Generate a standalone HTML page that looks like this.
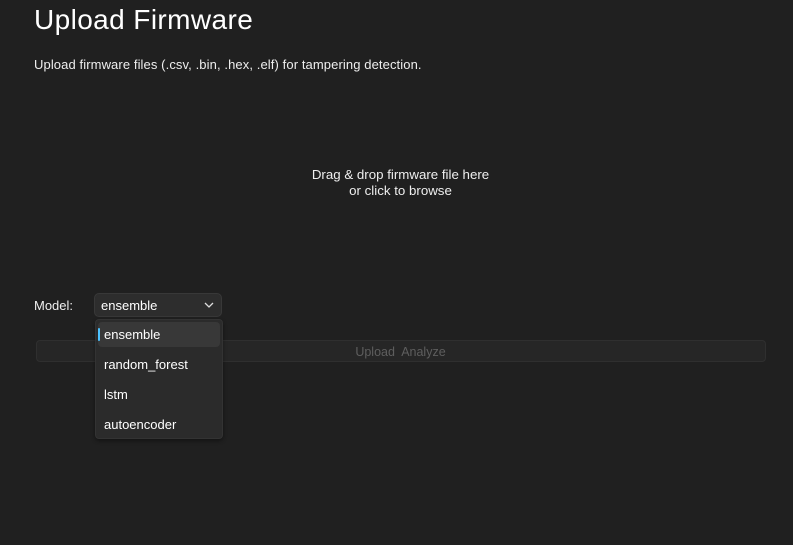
<!DOCTYPE html>
<html><head><style>
body{margin:0;width:793px;height:545px;background:#202020;font-family:"Liberation Sans",sans-serif;color:#fff;position:relative;overflow:hidden}
.a{position:absolute;white-space:nowrap}
</style></head><body>
<div class="a" style="left:34px;top:4px;font-size:28px;letter-spacing:0.4px">Upload Firmware</div>
<div class="a" style="left:34px;top:57px;font-size:13px;letter-spacing:0.1px;color:#eee">Upload firmware files (.csv, .bin, .hex, .elf) for tampering detection.</div>
<div class="a" style="left:0;width:801px;top:167px;font-size:13.3px;text-align:center;line-height:16px;color:#eee">Drag &amp; drop firmware file here<br>or click to browse</div>
<div class="a" style="left:34px;top:298px;font-size:13px;color:#eee">Model:</div>
<div class="a" style="left:94px;top:293px;width:128px;height:24px;background:#2d2d2d;border-radius:5px;box-sizing:border-box;border:1px solid #383838"></div>
<div class="a" style="left:101px;top:298px;font-size:13px">ensemble</div>
<svg class="a" style="left:203px;top:300px" width="12" height="10"><path d="M2 3 L6 7 L10 3" stroke="#ddd" stroke-width="1.3" fill="none"/></svg>
<div class="a" style="left:36px;top:340px;width:730px;height:22px;box-sizing:border-box;border:1px solid #2f2f2f;background:#262626;border-radius:4px"></div>
<div class="a" style="left:0;width:801px;text-align:center;top:345px;font-size:12.5px;color:#5e5e5e">Upload&nbsp; Analyze</div>
<div class="a" style="left:95px;top:319px;width:128px;height:120px;background:#2b2b2b;border:1px solid #333;box-sizing:border-box;border-radius:4px;box-shadow:0 2px 4px rgba(0,0,0,.4)"></div>
<div class="a" style="left:98px;top:322px;width:122px;height:25px;background:#383838;border-radius:4px"></div>
<div class="a" style="left:98px;top:328px;width:2px;height:13px;background:#4cc2ff;border-radius:1px"></div>
<div class="a" style="left:104px;top:327px;font-size:13px">ensemble</div>
<div class="a" style="left:104px;top:357px;font-size:13px">random_forest</div>
<div class="a" style="left:104px;top:387px;font-size:13px">lstm</div>
<div class="a" style="left:104px;top:417px;font-size:13px">autoencoder</div>
</body></html>
